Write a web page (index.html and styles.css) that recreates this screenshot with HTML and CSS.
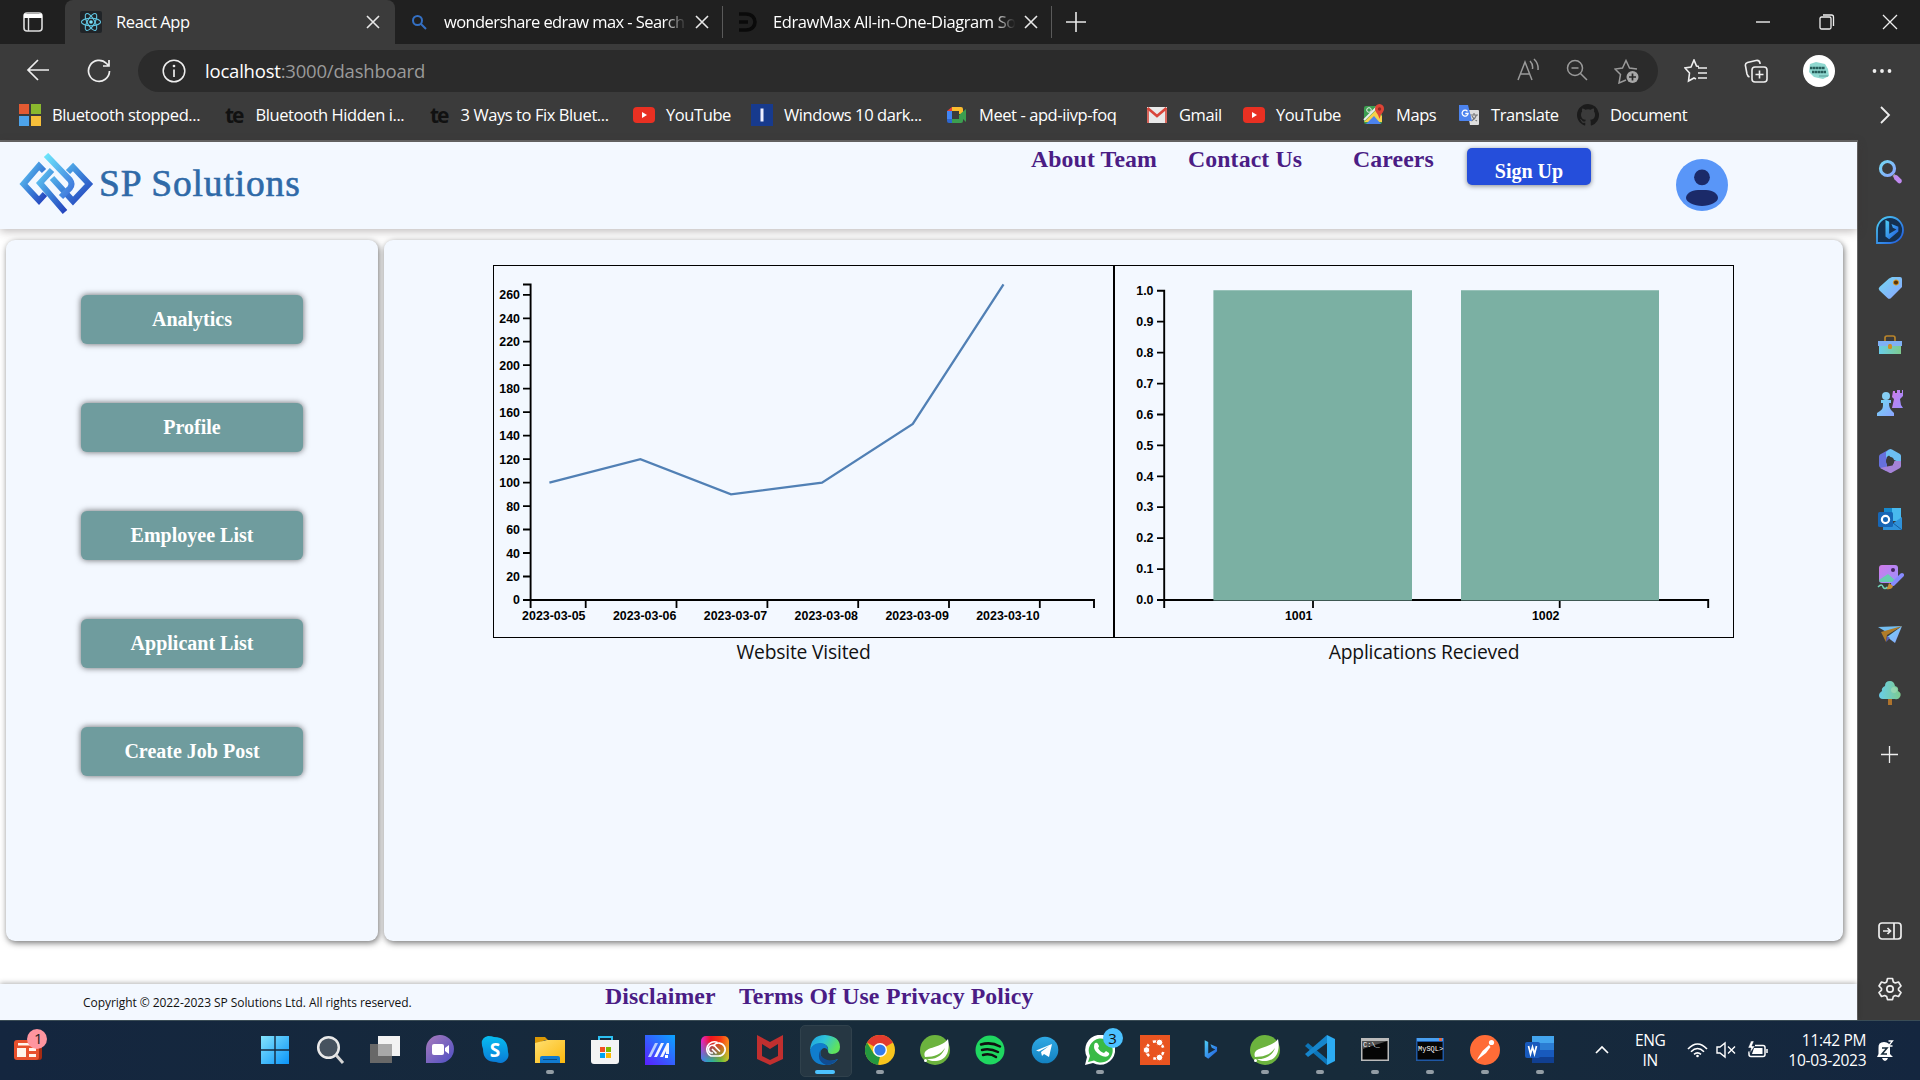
FILE: index.html
```html
<!DOCTYPE html>
<html lang="en">
<head>
<meta charset="utf-8">
<title>React App</title>
<link rel="stylesheet" href="styles.css">
</head>
<body>
<svg class="defs" width="0" height="0" aria-hidden="true">
  <defs>
    <linearGradient id="gLogo" x1="0" y1="0" x2="1" y2="1"><stop offset="0" stop-color="#5fc6f2"/><stop offset=".5" stop-color="#3b80d8"/><stop offset="1" stop-color="#2544bd"/></linearGradient>
    <linearGradient id="gLogoTop" x1="0" y1="0" x2="1" y2="1"><stop offset="0" stop-color="#6ce5fb"/><stop offset="1" stop-color="#3c70da"/></linearGradient>
    <linearGradient id="gSky" x1="0" y1="0" x2="1" y2="1"><stop offset="0" stop-color="#73d8f2"/><stop offset="1" stop-color="#8ba4ff"/></linearGradient>
    <linearGradient id="gPink" x1="0" y1="0" x2="1" y2="1"><stop offset="0" stop-color="#d07ae8"/><stop offset="1" stop-color="#9a91ff"/></linearGradient>
    <linearGradient id="gMint" x1="0" y1="0" x2="1" y2="0"><stop offset="0" stop-color="#68cdea"/><stop offset="1" stop-color="#7ecb8e"/></linearGradient>
    <linearGradient id="gBing" x1="0" y1="0" x2="1" y2="1"><stop offset="0" stop-color="#4fd0f5"/><stop offset="1" stop-color="#1f58e0"/></linearGradient>
    <linearGradient id="gWin" x1="0" y1="0" x2="1" y2="1"><stop offset="0" stop-color="#84e4fd"/><stop offset="1" stop-color="#0a94f8"/></linearGradient>
    <linearGradient id="gChat" x1="0" y1="0" x2="1" y2="1"><stop offset="0" stop-color="#a97bbb"/><stop offset="1" stop-color="#4d4fc4"/></linearGradient>
    <linearGradient id="gFolder" x1="0" y1="0" x2="1" y2="1"><stop offset="0" stop-color="#ffdf70"/><stop offset="1" stop-color="#fcb80d"/></linearGradient>
    <linearGradient id="gM" x1="0" y1="1" x2="1" y2="0"><stop offset="0" stop-color="#5b1dff"/><stop offset="1" stop-color="#0aa5ff"/></linearGradient>
    <linearGradient id="gCcTop" x1="0" y1="0" x2="1" y2="0"><stop offset="0" stop-color="#e22ad0"/><stop offset=".35" stop-color="#f0141e"/><stop offset=".7" stop-color="#f53a14"/><stop offset="1" stop-color="#ff8a1a"/></linearGradient>
    <linearGradient id="gCcLow" x1="0" y1="0" x2="1" y2="0"><stop offset="0" stop-color="#2f8cf0"/><stop offset=".4" stop-color="#28b6a0"/><stop offset=".7" stop-color="#5cc040"/><stop offset="1" stop-color="#c8d22c"/></linearGradient>
    <linearGradient id="gFade" x1="0" y1="0" x2="0" y2="1"><stop offset=".2" stop-color="#000"/><stop offset=".9" stop-color="#fff"/></linearGradient>
    <mask id="mCc"><path d="M0 0h30v30H0z" fill="url(#gFade)"/></mask>
    <linearGradient id="gEdgeTop" x1="0" y1="0" x2="1" y2=".4"><stop offset="0" stop-color="#1b9de2"/><stop offset=".5" stop-color="#2fc3d9"/><stop offset="1" stop-color="#5fe35c"/></linearGradient>
    <linearGradient id="gSky2" x1="0" y1="0" x2="0" y2="1"><stop offset="0" stop-color="#2fa9e4"/><stop offset="1" stop-color="#1381c0"/></linearGradient>
    <linearGradient id="gSkype" x1="0" y1="0" x2="0" y2="1"><stop offset="0" stop-color="#07bdf0"/><stop offset="1" stop-color="#0a7ad6"/></linearGradient>

    <symbol id="close" viewBox="0 0 16 16"><path d="M2 2l12 12M14 2L2 14" fill="none" stroke="#e8e8e8" stroke-width="1.6"/></symbol>
    <symbol id="youtube" viewBox="0 0 22 22"><rect y="3" width="22" height="16" rx="4" fill="#e93022"/><path d="M9 8l5 3-5 3z" fill="#fff"/></symbol>
    <symbol id="bingb" viewBox="0 0 24 24"><path d="M6 1l4 2v13l8-4.500-4-2-1.500-4 7.500 3v5L10 22l-4-3z" fill="url(#gBing)"/></symbol>
    <symbol id="spring" viewBox="0 0 30 30"><circle cx="15" cy="15" r="15" fill="#6cb33e"/><path d="M28 4c2 10 0 21-12 22-4 .3-7-.5-9-2 10 1 16-5 18-11-4 6-10 9-20 9C1 11 21 14 28 4z" fill="#fff"/><circle cx="5.500" cy="25.500" r="1.500" fill="#fff"/></symbol>
  </defs>
</svg>

<div class="screen">
  <div class="tabstrip">
    <div class="tab-actions"><svg width="22" height="22" viewBox="0 0 22 22"><rect x="2" y="2" width="18" height="18" rx="3" fill="none" stroke="#ddd" stroke-width="1.600"/><path d="M2 3h18v4H2z" fill="#fff"/><path d="M6.500 7v13" stroke="#ddd" stroke-width="1.400"/></svg></div>
    <div class="tab tab-active">
      <svg width="22" height="22" viewBox="0 0 22 22"><rect width="22" height="22" rx="2" fill="#202428"/><g fill="none" stroke="#61c6e2" stroke-width="1.100"><ellipse cx="11" cy="11" rx="9.600" ry="3.700"/><ellipse cx="11" cy="11" rx="9.600" ry="3.700" transform="rotate(60 11 11)"/><ellipse cx="11" cy="11" rx="9.600" ry="3.700" transform="rotate(120 11 11)"/></g><circle cx="11" cy="11" r="1.800" fill="#7fe0f5"/></svg>
      <span class="tab-title">React App</span>
      <svg width="16" height="16"><use href="#close"/></svg>
    </div>
    <div class="tab tab-search">
      <svg width="16" height="16" viewBox="0 0 16 16" fill="none" stroke="#3470c4" stroke-width="2"><circle cx="6.500" cy="6.500" r="4.500"/><path d="M10 10l5 5"/></svg>
      <span class="tab-title tab-fade">wondershare edraw max - Search</span>
      <svg width="16" height="16"><use href="#close"/></svg>
    </div>
    <div class="tab tab-edraw">
      <svg width="20" height="22" viewBox="0 0 20 22" fill="none" stroke="#0a0a0a" stroke-width="3.600"><path d="M1 3h7c12 0 12 16 0 16H1M1 11h9"/></svg>
      <span class="tab-title tab-fade">EdrawMax All-in-One-Diagram So</span>
      <svg width="16" height="16"><use href="#close"/></svg>
    </div>
    <div class="newtab"><svg width="20" height="20" viewBox="0 0 20 20"><path d="M10 0v20M0 10h20" stroke="#e8e8e8" stroke-width="1.600"/></svg></div>
    <div class="winctl">
      <svg width="16" height="16" viewBox="0 0 16 16"><path d="M1 8h14" stroke="#fff" stroke-width="1.300"/></svg>
      <svg width="16" height="16" viewBox="0 0 16 16" fill="none" stroke="#eee" stroke-width="1.300"><rect x="1" y="3" width="11" height="12" rx="1.500"/><path d="M4 1h8.500a2 2 0 0 1 2 2v9"/></svg>
      <svg width="16" height="16" viewBox="0 0 16 16"><path d="M1 1l14 14M15 1L1 15" stroke="#eee" stroke-width="1.300"/></svg>
    </div>
  </div>

  <div class="toolbar">
    <svg class="back" width="24" height="24" viewBox="0 0 24 24" fill="none" stroke="#eee" stroke-width="1.700"><path d="M23 11H2M12 1L2 11l10 10"/></svg>
    <svg class="reload" width="24" height="24" viewBox="0 0 24 24" fill="none" stroke="#eee" stroke-width="1.700"><path d="M22.500 12a10.500 10.500 0 1 1-3-7.500L22 7M22 1v6h-6"/></svg>
    <div class="omnibox">
      <svg width="24" height="24" viewBox="0 0 24 24" fill="none" stroke="#eee" stroke-width="1.500"><circle cx="12" cy="12" r="10.800"/><path d="M12 10.500V18" stroke-width="1.700"/><circle cx="12" cy="7" r=".6"/></svg>
      <span class="url">localhost<span class="path">:3000/dashboard</span></span>
      <div class="omni-icons">
        <svg width="24" height="24" viewBox="0 0 24 24" fill="none" stroke="#9a9a9a" stroke-width="1.500"><path d="M2 22L9 4l7 18M4.500 16h9M14 3c2 2 3 5 2.500 8M18 1c3 3 4.500 7 4 11"/></svg>
        <svg width="24" height="24" viewBox="0 0 24 24" fill="none" stroke="#9a9a9a" stroke-width="1.500"><circle cx="10" cy="10" r="7.500"/><path d="M6.500 10h7M15.500 15.500L22 22"/></svg>
        <svg width="26" height="26" viewBox="0 0 26 26" fill="none" stroke="#9a9a9a" stroke-width="1.500"><path d="M12 22l-7 3 1.500-8.500L1 11l7.500-1L12 2.500 15.500 10l7.500 1"/><circle cx="18.500" cy="19" r="6" fill="#a8a8a8" stroke="none"/><path d="M18.500 15.500v7M15 19h7" stroke="#2b2b2b" stroke-width="1.700"/></svg>
      </div>
    </div>
    <svg class="favs" width="24" height="24" viewBox="0 0 24 24" fill="none" stroke="#eee" stroke-width="1.600"><path d="M15 7.500l-2.500-.5L10 1 7 8 1 9l4.500 5L4.500 22 10 19l2 1M14 9h9M14 14h9M14 19h9"/></svg>
    <svg class="collections" width="24" height="24" viewBox="0 0 24 24" fill="none" stroke="#eee" stroke-width="1.600"><rect x="8" y="8" width="15" height="15" rx="3"/><path d="M15.500 11.500v8M11.500 15.500h8M5.500 18C4 17.500 3.500 17 3 15L1.500 7C1 5 2 4 3.500 3.500L12 1.500c2-.5 3.500.5 4 2.500v1"/></svg>
    <div class="profile"><svg width="32" height="32" viewBox="0 0 32 32"><circle cx="16" cy="16" r="16" fill="#fff"/><path d="M7 9l6-2 9 2 3 5 1 7-6 3-9-2-5-5z" fill="#8fd8d0"/><path d="M7 13h15M9 17h14" stroke="#265d5a" stroke-width="2.400" stroke-dasharray="2.500 .4"/><path d="M16 21h9" stroke="#5a9a95" stroke-width="1"/></svg></div>
    <svg class="dots" width="20" height="6" viewBox="0 0 20 6" fill="#eee"><circle cx="2.500" cy="3" r="1.900"/><circle cx="10" cy="3" r="1.900"/><circle cx="17.500" cy="3" r="1.900"/></svg>
  </div>

  <div class="bookmarks">
    <div class="bm"><svg width="22" height="22" viewBox="0 0 22 22"><path d="M0 0h10v10H0z" fill="#e35a32"/><path d="M12 0h10v10H12z" fill="#8ab82e"/><path d="M0 12h10v10H0z" fill="#4da3ea"/><path d="M12 12h10v10H12z" fill="#f7bf3a"/></svg><span>Bluetooth stopped...</span></div>
    <div class="bm bm-te"><b class="te">te</b><span>Bluetooth Hidden i...</span></div>
    <div class="bm bm-te"><b class="te">te</b><span>3 Ways to Fix Bluet...</span></div>
    <div class="bm"><svg width="22" height="22"><use href="#youtube"/></svg><span>YouTube</span></div>
    <div class="bm"><svg width="22" height="22" viewBox="0 0 22 22"><path d="M0 0h22v22H0z" fill="#173a8d"/><path d="M9.500 4.500h3v13h-3z" fill="#eef"/></svg><span>Windows 10 dark...</span></div>
    <div class="bm"><svg width="22" height="22" viewBox="0 0 22 22"><path d="M1 7l5-4v4z" fill="#e94335"/><path d="M6 3h9a2 2 0 0 1 2 2v5h-4V7H6z" fill="#fbbc2e"/><path d="M1 7h5v8H1z" fill="#4285f4"/><path d="M1 15h5v4H3a2 2 0 0 1-2-2z" fill="#2d66d0"/><path d="M6 15h7v-4l7-6v13l-3-3v2a2 2 0 0 1-2 2H6z" fill="#3c9e50"/></svg><span>Meet - apd-iivp-foq</span></div>
    <div class="bm"><svg width="22" height="22" viewBox="0 0 22 22"><path d="M1 3h20v16H1z" fill="#e9e9e9"/><path d="M2 19V4" fill="none" stroke="#d9675d" stroke-width="2"/><path d="M20 19V4" fill="none" stroke="#d9675d" stroke-width="2"/><path d="M1.500 4l9.500 8 9.500-8" fill="none" stroke="#d9463b" stroke-width="2.600"/></svg><span>Gmail</span></div>
    <div class="bm"><svg width="22" height="22"><use href="#youtube"/></svg><span>YouTube</span></div>
    <div class="bm"><svg width="22" height="22" viewBox="0 0 22 22"><rect x="1" y="2" width="18" height="18" rx="2" fill="#3c9e50"/><path d="M1 18L13 6l6 6v6z" fill="#f6d14a"/><path d="M3 20l8-8 7 8z" fill="#4c83ee"/><path d="M1 16L15 2" stroke="#eee" stroke-width="2"/><path d="M16.500 0a4.700 4.700 0 0 1 4.500 5c0 3-3 4-4.500 10C15 9 12 8 12 5a4.700 4.700 0 0 1 4.500-5z" fill="#de4436"/><circle cx="16.500" cy="5" r="1.700" fill="#8d2a22"/><circle cx="6" cy="6" r="2.300" fill="none" stroke="#eee"/></svg><span>Maps</span></div>
    <div class="bm"><svg width="22" height="22" viewBox="0 0 22 22"><path d="M9 6h11a1 1 0 0 1 1 1v13a1 1 0 0 1-1 1h-8z" fill="#ddd"/><path d="M12 11h8M16 9v2M18.500 11c-1 3-3 5-5 6M14 12c1 2 3 4 5 5" stroke="#777" stroke-width="1.200" fill="none"/><path d="M1 1h9l4 16H2a1 1 0 0 1-1-1z" fill="#4c83ee"/><path d="M9.500 7.300a3 3 0 1 0 .6 2.200H7.300" stroke="#fff" stroke-width="1.300" fill="none"/></svg><span>Translate</span></div>
    <div class="bm"><svg width="22" height="22" viewBox="0 0 16 16"><path fill="#1b1b1b" d="M8 0C3.580 0 0 3.580 0 8c0 3.540 2.290 6.530 5.470 7.590.4.070.55-.17.55-.38 0-.19-.01-.82-.01-1.490-2.010.37-2.530-.49-2.690-.94-.09-.23-.48-.94-.82-1.130-.28-.15-.68-.52-.01-.53.63-.01 1.080.58 1.230.82.72 1.210 1.870.87 2.330.66.07-.52.28-.87.510-1.070-1.780-.2-3.640-.89-3.640-3.950 0-.87.31-1.590.82-2.150-.08-.2-.36-1.020.08-2.120 0 0 .67-.21 2.200.82a7.600 7.600 0 0 1 4 0c1.530-1.040 2.200-.82 2.200-.82.44 1.100.16 1.920.08 2.120.51.56.82 1.270.82 2.150 0 3.070-1.870 3.750-3.650 3.950.29.25.54.73.54 1.480 0 1.070-.01 1.930-.01 2.200 0 .21.15.46.55.38A8 8 0 0 0 8 0z"/></svg><span>Document</span></div>
    <svg class="more" width="12" height="20" viewBox="0 0 12 20" fill="none" stroke="#eee" stroke-width="1.800"><path d="M1 2l8 8-8 8"/></svg>
  </div>

  <div class="browser-body">
    <div class="page">
      <header class="site-header">
        <svg class="logo" width="76" height="62" viewBox="0 0 76 62" fill="none" stroke-width="6">
          <path d="M25 18l-5-5L4.500 31 20 47.500 26 41" stroke="url(#gLogo)"/>
          <path d="M49 19l5-5L70 31 54 48 33 25" stroke="url(#gLogo)"/>
          <path d="M27 2l24 25q3 4 0 8l-9 9" stroke="url(#gLogoTop)"/>
          <path d="M33 17L21 30l25 29" stroke="url(#gLogo)"/>
        </svg>
        <span class="brand">SP Solutions</span>
        <nav class="topnav"><a>About Team</a><a>Contact Us</a><a>Careers</a></nav>
        <button class="signup">Sign Up</button>
        <svg class="avatar" width="52" height="52" viewBox="0 0 52 52"><circle cx="26" cy="26" r="26" fill="#5996f8"/><circle cx="26" cy="18.300" r="7.900" fill="#1b2a69"/><path d="M22 31h8c7 0 12 4 12 8 0 4-8 8-16 8s-16-4-16-8c0-4 5-8 12-8z" fill="#1b2a69"/></svg>
      </header>

      <div class="columns">
        <aside class="side">
          <button>Analytics</button><button>Profile</button><button>Employee List</button><button>Applicant List</button><button>Create Job Post</button>
        </aside>
        <main class="main">
          <figure class="chart">
            <svg class="plot plot-line" viewBox="494 266 619 371">
              <path class="axis" d="M523 284.500h7.600V600h563.400v8M530.600 600v8"/>
              <path class="ticks" d="M523 294.800h7.600M523 318.300h7.600M523 341.700h7.600M523 365.200h7.600M523 388.700h7.600M523 412.200h7.600M523 435.600h7.600M523 459.100h7.600M523 482.600h7.600M523 506.100h7.600M523 529.500h7.600M523 553h7.600M523 576.500h7.600M523 600h7.600M585.700 600v8M676.500 600v8M767.400 600v8M858.200 600v8M949 600v8M1039.800 600v8"/>
              <g class="lbl"><text x="520" y="299">260</text><text x="520" y="322.500">240</text><text x="520" y="346">220</text><text x="520" y="369.500">200</text><text x="520" y="393">180</text><text x="520" y="416.500">160</text><text x="520" y="440">140</text><text x="520" y="463.500">120</text><text x="520" y="487">100</text><text x="520" y="510.500">80</text><text x="520" y="534">60</text><text x="520" y="557.500">40</text><text x="520" y="581">20</text><text x="520" y="604">0</text>
              <text x="585.500" y="620">2023-03-05</text><text x="676.300" y="620">2023-03-06</text><text x="767.200" y="620">2023-03-07</text><text x="858" y="620">2023-03-08</text><text x="948.800" y="620">2023-03-09</text><text x="1039.600" y="620">2023-03-10</text></g>
              <path class="line" d="M549.400 482.600L640.400 459.100 731 494.300 822 482.600 912.800 424 1003.500 284.300"/>
            </svg>
            <figcaption>Website Visited</figcaption>
          </figure>
          <figure class="chart">
            <svg class="plot plot-bar" viewBox="1115 266 618 371">
              <path class="axis" d="M1157 290.800h7.200V600h544v8M1164.200 600v8"/>
              <path class="ticks" d="M1157 321.700h7.200M1157 352.600h7.200M1157 383.600h7.200M1157 414.500h7.200M1157 445.400h7.200M1157 476.300h7.200M1157 507.200h7.200M1157 538.200h7.200M1157 569.100h7.200M1157 600h7.200M1313 600v8M1559.700 600v8"/>
              <path d="M1213.400 290.300H1412V600.500h-198.600zM1461 290.300h198V600.500h-198z" fill="#7bb0a3"/>
              <g class="lbl"><text x="1153.500" y="295">1.0</text><text x="1153.500" y="326">0.9</text><text x="1153.500" y="357">0.8</text><text x="1153.500" y="387.500">0.7</text><text x="1153.500" y="418.500">0.6</text><text x="1153.500" y="449.500">0.5</text><text x="1153.500" y="480.500">0.4</text><text x="1153.500" y="511">0.3</text><text x="1153.500" y="542">0.2</text><text x="1153.500" y="573">0.1</text><text x="1153.500" y="604">0.0</text><text x="1312.500" y="620">1001</text><text x="1559.500" y="620">1002</text></g>
            </svg>
            <figcaption>Applications Recieved</figcaption>
          </figure>
        </main>
      </div>

      <footer class="site-footer">
        <span class="copy">Copyright © 2022-2023 SP Solutions Ltd. All rights reserved.</span>
        <nav class="footnav"><a>Disclaimer</a><a>Terms Of Use</a><a>Privacy Policy</a></nav>
      </footer>
    </div>

    <div class="edgebar">
      <svg viewBox="0 0 28 28"><circle cx="11.500" cy="10.500" r="7" fill="none" stroke="url(#gSky)" stroke-width="3.200"/><path d="M17.500 17l2 2" stroke="#a9a4a8" stroke-width="3"/><path d="M20 19.500l3.500 3.500" stroke="#c08af0" stroke-width="4.600" stroke-linecap="round"/></svg>
      <svg viewBox="0 0 28 28"><path d="M1 27V14A13 13 0 1 1 14 27z" fill="#15304f" stroke="url(#gBing)" stroke-width="1.800"/><svg x="4" y="3" width="22" height="22" class="inner"><use href="#bingb"/></svg></svg>
      <svg viewBox="0 0 28 28"><path d="M16 3h8a2 2 0 0 1 2 2v8L15 24a2.500 2.500 0 0 1-3.500 0L3.500 16.500a2.500 2.500 0 0 1 0-3.500L13 4.500z" fill="url(#gSky)"/><circle cx="20" cy="8.500" r="2.600" fill="#5b3508" stroke="#dc9b28"/></svg>
      <svg viewBox="0 0 28 28"><path d="M9 9V6q0-2 2-2h6q2 0 2 2v3" fill="none" stroke="#b9842b" stroke-width="1.700"/><path d="M3 13h22v9H3z" fill="url(#gMint)"/><path d="M2 9h24v5H2z" fill="#7fb0f5"/><rect x="12" y="12" width="4" height="5" rx="1.500" fill="#cf8f25"/></svg>
      <svg viewBox="0 0 28 28"><path d="M17 2h2v2h2V1h3v3h2V1h1v6l-3 3 1 6 2 3H16l2-9-2-2z" fill="url(#gPink)"/><circle cx="10" cy="7" r="4" fill="#86cdf3"/><path d="M5 11h10v3h-2c0 4 1 6 3 8l2 2v3H1v-3l3-2c3-2 3-4 3-8H5z" fill="url(#gSky)"/></svg>
      <svg viewBox="0 0 28 28"><path d="M13 2.500L4 7.500q-1 1-1 2v9q0 1 1 2l6 3.500 1-4V9l3-2z" fill="#6670dc"/><path d="M13 2.500q1.500-1 3 0l8 4.500q1 1 1 2v7l-8-3.500-4-4-3 2V5z" fill="#6cbef3"/><path d="M25 14v5q0 1-1 2l-8 4.500q-1.500 1-3 0L4 21l7-1.500 5.500-1 2-4.500z" fill="#a583d8"/><circle cx="14" cy="14" r="4" fill="#3b3b3b"/></svg>
      <svg viewBox="0 0 28 28"><path d="M8 3h17v13H8z" fill="#48b9ee"/><path d="M8 3h8v7H8z" fill="#1688cc"/><path d="M7 23V14l9 5 10-7v13H7z" fill="#2f92da"/><path d="M26 25l-9-7" stroke="#165e9e"/><rect x="2" y="7" width="15" height="15" rx="1.500" fill="#1766b5"/><circle cx="9.500" cy="14.500" r="3.600" fill="none" stroke="#fff" stroke-width="2.200"/></svg>
      <svg viewBox="0 0 28 28"><rect x="3" y="2" width="19" height="18" rx="3" fill="url(#gPink)"/><path d="M3 17l9-6 9 8H6q-3 0-3-2z" fill="#67cdb0"/><circle cx="17" cy="7" r="2" fill="#44265f"/><path d="M26 12l-9 9" stroke="#878bff" stroke-width="4" stroke-linecap="round"/><path d="M13 20l4 3q-1 4-7 3l2-3z" fill="#c98e38"/><path d="M2 24q4-4 5 0 2 3 4 0" fill="none" stroke="#72d4b7" stroke-width="1.500"/></svg>
      <svg viewBox="0 0 28 28"><path d="M2 6l24-1-14 7z" fill="#73bdf0"/><path d="M26 5L19 22l-8-6z" fill="url(#gSky)"/><path d="M5 11L26 5 11 14l-1 7z" fill="#b07c28"/><path d="M11 15l-1 6 4-4z" fill="#5961b8"/></svg>
      <svg viewBox="0 0 28 28"><path d="M12 18h4v8h-4z" fill="#ae732c"/><path d="M14 2q4 0 5 5 4 1 3 5 4 2 2 6-2 3-5 2H7q-4 0-4-4 0-2 3-4-1-3 3-5 0-5 5-5z" fill="url(#gMint)"/><circle cx="18" cy="11" r="3" fill="#b1dfb5" opacity=".5"/></svg>
      <svg class="e-plus" viewBox="0 0 28 28"><path d="M13.500 6v17M5 14.500h17" stroke="#eee" stroke-width="1.300"/></svg>
      <i class="rule"></i>
      <svg class="e-panel" viewBox="0 0 28 28" fill="none" stroke="#eee" stroke-width="1.700"><rect x="3" y="6" width="22" height="16" rx="3"/><path d="M18 6v16M7 14h7M11.500 11l3 3-3 3"/></svg>
      <svg viewBox="0 0 28 28" fill="none" stroke="#eee" stroke-width="1.700" stroke-linejoin="round"><circle cx="14" cy="14" r="3.200"/><path d="M11.500 3.500h5l.8 3.400 2 1.100 3.200-1 2.500 4-2.500 2.500v1.600l2.500 2.400-2.500 4-3.200-1-2 1.100-.8 3h-5l-.8-3-2-1.100-3.200 1-2.500-4 2.500-2.400v-1.600L3 11l2.500-4 3.200 1 2-1.100z"/></svg>
    </div>
  </div>

  <div class="taskbar">
    <div class="widget"><svg width="46" height="46" viewBox="0 0 46 46"><rect x="18" y="19" width="15" height="19" rx="3" fill="#a52b13"/><rect x="5" y="18" width="25" height="20" rx="3" fill="#e8502d"/><path d="M9 21h17v2.500H9zM8 26h9v9H8zM20 26h7v3h-7zM20 32h7v3h-7z" fill="#fff4ec"/><circle cx="28" cy="17" r="10" fill="#ff959f"/></svg><span>1</span></div>
    <div class="apps">
      <div><svg viewBox="0 0 30 30" fill="url(#gWin)"><path d="M1 1h13.300v13.300H1zM15.700 1H29v13.300H15.700zM1 15.700h13.300V29H1zM15.700 15.700H29V29H15.700z"/></svg></div>
      <div><svg viewBox="0 0 30 30"><circle cx="13.500" cy="12.500" r="10.300" fill="#46525f" stroke="#e9e9e9" stroke-width="2.500"/><path d="M21 20l7 8" stroke="#d5d5d5" stroke-width="3"/></svg></div>
      <div><svg viewBox="0 0 30 30"><path d="M0 9h22v19H0z" fill="#686868"/><path d="M8 1h22v20H8z" fill="#f3f3f3"/><path d="M8 9h14v12H8z" fill="#a8a8a8"/></svg></div>
      <div><svg viewBox="0 0 30 30"><path d="M1 28V15A14 14 0 1 1 15 28z" fill="url(#gChat)"/><rect x="7" y="9" width="12" height="11" rx="2" fill="#fff"/><path d="M20 13l4-3v9l-4-3z" fill="#fff"/></svg></div>
      <div><svg viewBox="0 0 30 30"><path d="M8 1q4 0 6 1 14 0 14 15 2 6-4 10-3 2-8 0Q3 27 3 14-1 3 8 1z" fill="url(#gSkype)"/><text x="15" y="22" class="skype-s">S</text></svg></div>
      <div class="run"><svg viewBox="0 0 30 30"><path d="M0 2h10l3 3h-3L0 10z" fill="#da9805"/><path d="M0 8l12-3h18v23H0z" fill="url(#gFolder)"/><path d="M5 28v-5q0-2 2-2h16q2 0 2 2v5z" fill="#117bd1"/><path d="M8 24.500h14" stroke="#0a4d86"/></svg></div>
      <div><svg viewBox="0 0 30 30"><path d="M9 7V2h13v5" fill="none" stroke="#2cc0f2" stroke-width="2"/><path d="M1 5h28v21q0 3-3 3H4q-3 0-3-3z" fill="#f4f4f4"/><path d="M10 12h5v5h-5z" fill="#f25022"/><path d="M16 12h5v5h-5z" fill="#7fba00"/><path d="M10 18h5v5h-5z" fill="#00a4ef"/><path d="M16 18h5v5h-5z" fill="#ffb900"/></svg></div>
      <div><svg viewBox="0 0 30 30"><path d="M0 0h30v30H0z" fill="url(#gM)"/><path d="M3 22h3l7-14h-3z" fill="#b9cdff"/><path d="M9 22h3l7-14h-3zM15 22h3l3-6v3h3V8h-2z" fill="#f2f5ff"/><path d="M20 20h3v3h-3z" fill="#fff"/></svg></div>
      <div><svg viewBox="0 0 30 30"><rect x="1" y="1" width="28" height="26" rx="5" fill="url(#gCcTop)"/><rect x="1" y="1" width="28" height="26" rx="5" fill="url(#gCcLow)" mask="url(#mCc)"/><g fill="none" stroke="#fff" stroke-width="1.700"><path d="M17.500 7.500a7 7 0 1 0-6.500 13.500h7.500a6.500 6.500 0 1 0-5-10.500"/><path d="M20 16.500l-4-4a4 4 0 1 0-5 5.500h2M12 14l4.500 4.500"/></g></svg></div>
      <div><svg viewBox="0 0 30 30"><path d="M2 0l13 7 13-7v24l-13 6-13-6z" fill="#c02f2f"/><path d="M7 9l8 5 8-5v12l-8 4-8-4z" fill="#172b3a"/></svg></div>
      <div class="run current"><svg viewBox="0 0 30 30"><path d="M0 15Q1 0 15 0q15 1 15 12 0 7-8 7-4 0-4-3 1-5-4-7Q5 7 0 15z" fill="url(#gEdgeTop)"/><path d="M0 15Q3 8 10 8q8 0 8 8-1-3-4-3-5 2-3 8 4 8 17 3-5 7-14 6Q1 29 0 15z" fill="#107dcd"/><path d="M11 14q-3 7 4 10 6 3 13 0-5 6-12 6Q5 25 11 14z" fill="#114c91"/></svg></div>
      <div class="run"><svg viewBox="0 0 30 30"><circle cx="15" cy="15" r="15" fill="#f9c51d"/><path d="M15 15L2 7.500A15 15 0 0 1 28 7.500z" fill="#e33b2e"/><path d="M2 7.500L9 19l6 2.500L13 30A15 15 0 0 1 2 7.500z" fill="#24983f"/><circle cx="15" cy="15" r="7" fill="#fff"/><circle cx="15" cy="15" r="5.600" fill="#347cea"/></svg></div>
      <div><svg viewBox="0 0 30 30"><use href="#spring"/></svg></div>
      <div><svg viewBox="0 0 30 30"><circle cx="15" cy="15" r="14.500" fill="#1fd760"/><path d="M6 9.500q10-3 19 2M7 15q8-2 16 2M8 20q7-2 13 2" fill="none" stroke="#101010" stroke-width="2.500" stroke-linecap="round"/></svg></div>
      <div><svg viewBox="0 0 30 30"><circle cx="15" cy="15" r="13.300" fill="url(#gSky2)"/><path d="M6 15.500L22 9l-3 13-5-3-2 2-1-4 8-6-10 5.500z" fill="#fff"/></svg></div>
      <div class="run"><svg viewBox="0 0 30 30"><path d="M0 30l2-8A15 15 0 1 1 8 28z" fill="#fff"/><path d="M3 27l2-6A12 12 0 1 1 9 25.500z" fill="#39ba46"/><path d="M10 8q2-1 3 1l1 2q0 1-1 2 2 4 6 5l2-2 3 2q1 1-1 3-3 2-8-1-6-4-6-8 0-3 1-4z" fill="#fff"/></svg><b class="badge">3</b></div>
      <div><svg viewBox="0 0 30 30"><path d="M0 0h30v30H0z" fill="#e95420"/><circle cx="15" cy="15" r="8.500" fill="none" stroke="#fff" stroke-width="2.600" stroke-dasharray="13 4.800" stroke-dashoffset="-2"/><g fill="#fff" stroke="#e95420"><circle cx="6.500" cy="15" r="3.300"/><circle cx="19.500" cy="7.500" r="3.300"/><circle cx="19.500" cy="22.500" r="3.300"/></g></svg></div>
      <div><svg viewBox="-5 -5 34 34"><use href="#bingb" width="24" height="24"/></svg></div>
      <div class="run"><svg viewBox="0 0 30 30"><use href="#spring"/></svg></div>
      <div class="run"><svg viewBox="0 0 30 30"><path d="M3 8L22 24v6L0 11z" fill="#0d75b8"/><path d="M0 19L22 0v8L3 22z" fill="#1686cd"/><path d="M22 0l8 4v22l-8 4z" fill="#2cabf2"/></svg></div>
      <div class="run"><svg viewBox="0 0 30 30"><path d="M1 3h28v23H1z" fill="#bbb"/><path d="M2.500 6h25v18.500h-25z" fill="#050505"/><path d="M2.500 6h25l-25 8z" fill="#505050"/><text x="3" y="12" class="cmd-t">C:\_</text></svg></div>
      <div class="run"><svg viewBox="0 0 30 30"><path d="M1 3h28v23H1z" fill="#1f58a5"/><path d="M2 3h26v3H2z" fill="#49a0f0"/><path d="M24 3h3v3h-3z" fill="#e06a46"/><path d="M2.500 7h25v17.500h-25z" fill="#050505"/><text x="3" y="16" class="cmd-t">MySQL&gt;</text></svg></div>
      <div class="run"><svg viewBox="0 0 30 30"><circle cx="15" cy="15" r="15" fill="#ff6c37"/><circle cx="21.500" cy="7.500" r="2.600" fill="#fff"/><path d="M19 10l1.500 2-4.500 6-9 7 1.500-3 4-6z" fill="#fff"/></svg></div>
      <div class="run"><svg viewBox="0 0 30 30"><path d="M7 1h22v7H7z" fill="#43a5ee"/><path d="M7 8h22v7H7z" fill="#2b7cd3"/><path d="M7 15h22v7H7z" fill="#185abd"/><path d="M7 22h22v6H7z" fill="#103f91"/><rect y="7" width="15" height="16" rx="2" fill="#185abd"/><path d="M3.500 11l2 8 2-7 2 7 2-8" fill="none" stroke="#fff" stroke-width="1.700"/></svg></div>
    </div>
    <div class="tray">
      <svg class="up" width="14" height="9" viewBox="0 0 14 9" fill="none" stroke="#fff" stroke-width="1.700"><path d="M1 8l6-6 6 6"/></svg>
      <div class="lang"><span>ENG</span><span>IN</span></div>
      <svg class="wifi" width="21" height="16" viewBox="0 0 21 16" fill="none" stroke="#fff" stroke-width="1.600"><path d="M1 7q9.500-10 19 0M4 9.700q6.500-6.500 13 0M7 12.300q3.500-3 7 0"/><circle cx="10.500" cy="14" r="1.300" fill="#fff" stroke="none"/></svg>
      <svg class="vol" width="21" height="18" viewBox="0 0 21 18" fill="none" stroke="#fff" stroke-width="1.400"><path d="M1 6h3l5-4v14l-5-4H1zM12 5.500l7 7M19 5.500l-7 7"/></svg>
      <svg class="bat" width="22" height="18" viewBox="0 0 22 18" fill="none" stroke="#fff" stroke-width="1.500"><path d="M8 4.500h8a2 2 0 0 1 2 2v7a2 2 0 0 1-2 2H4a2 2 0 0 1-2-2v-3M20 8v4"/><path d="M7 7h8.500v6H5z" fill="#fff" stroke="none"/><path d="M4 0L1 7h3l-1 5 5-7H5l2-5z" fill="#fff" stroke="#14263c" stroke-width=".5"/></svg>
      <div class="clock"><span>11:42 PM</span><span>10-03-2023</span></div>
      <svg class="bell" width="20" height="22" viewBox="0 0 20 22"><path d="M8 3q6 0 6 6v6l3 3H1l1.500-3V9Q2 3 8 3zM6 19h6q-1 3-3 3t-3-3z" fill="#fff"/><path d="M6 9h5l-5 6h5" fill="none" stroke="#172b3a" stroke-width="1.600"/><path d="M12.500 2h4l-4 5h4" fill="none" stroke="#fff" stroke-width="1.300"/></svg>
    </div>
  </div>
</div>
</body>
</html>
```
FILE: styles.css
```css
* { box-sizing: border-box; }
body { margin: 0; font-family: "Open Sans", "Noto Sans", sans-serif; background: #fff; }
svg { display: block; flex: none; }
.defs { position: absolute; }
.screen { width: 1920px; height: 1080px; overflow: hidden; display: flex; flex-direction: column; background: #3b3b3b; }
span { white-space: nowrap; }

/* Browser tabs */
.tabstrip { height: 44px; background: #202020; display: flex; align-items: stretch; color: #fff; flex: none; }
.tab-actions { width: 65px; padding: 11px 0 0 22px; }
.tab { display: grid; align-items: center; font-size: 16.5px; letter-spacing: -.4px; }
.tab-active { width: 330px; padding-left: 15px; grid-template-columns: 36px 249px 16px; background: #3b3b3b; border-radius: 8px 8px 0 0; }
.tab-search { width: 328px; padding-left: 16px; grid-template-columns: 33px 250px 16px; letter-spacing: -.58px; background: linear-gradient(#5a5a5a, #5a5a5a) right center / 1px 32px no-repeat; }
.tab-edraw { width: 329px; padding-left: 15px; grid-template-columns: 35px 250px 16px; background: linear-gradient(#5a5a5a, #5a5a5a) right center / 1px 32px no-repeat; }
.tab-title { line-height: 24px; }
.tab-fade { width: 250px; mask-image: linear-gradient(90deg, #000 88%, transparent 97%); }
.newtab { padding: 12px 0 0 14px; }
.winctl { margin-left: auto; margin-right: 22px; display: flex; align-items: center; gap: 47.5px; }

/* Address bar */
.toolbar { height: 54px; flex: none; display: flex; align-items: center; }
.back { margin-left: 26px; }
.reload { margin-left: 37px; }
.omnibox { margin-left: 27px; width: 1520px; height: 42px; border-radius: 21px; background: #2b2b2b; display: flex; align-items: center; padding-left: 24px; }
.url { margin: -2px 0 0 19px; color: #fff; font-size: 18.5px; letter-spacing: -.2px; }
.path { color: #9a9a9a; }
.omni-icons { display: flex; gap: 25px; margin-left: auto; margin-right: 18px; }
.favs { margin-left: 26px; }
.collections { margin-left: 36px; }
.profile { margin-left: 35px; }
.dots { margin-left: 37px; }

/* Bookmarks */
.bookmarks { height: 42px; flex: none; padding: 0 0 8px 19px; display: grid; align-items: center; grid-template-columns: 206px 205px 203px 118px 195px 200px 97px 120px 95px 119px 303px 12px; color: #fff; font-size: 16.5px; letter-spacing: -.42px; }
.bm { display: grid; grid-template-columns: 33px 1fr; align-items: center; line-height: 24px; }
.bm-te { grid-template-columns: 30.5px 1fr; }
.te { color: #111; font: bold 21px/20px "Open Sans", sans-serif; letter-spacing: -2px; }

.browser-body { flex: 1; min-height: 0; display: flex; }
.page { width: 1858px; border-top: 2px solid #666; border-right: 1px solid #666; background: #fff; display: flex; flex-direction: column; }

/* Site header */
.site-header { height: 87px; flex: none; background: #f3f8ff; box-shadow: 0 2px 9px rgba(60, 50, 50, .35); display: flex; align-items: flex-start; font-family: "Liberation Serif", serif; }
.logo { margin: 11px 0 0 19px; }
.brand { margin: 17px 0 0 4px; width: 932px; font-size: 37.5px; line-height: 50px; letter-spacing: .85px; color: #2f6aa8; -webkit-text-stroke: .6px #2f6aa8; }
.topnav { display: grid; grid-template-columns: 157px 165px 114px; }
.topnav a, .footnav a { font: bold 23.8px/30px "Liberation Serif", serif; letter-spacing: .1px; color: #4b1d85; white-space: nowrap; }
.topnav a { padding-top: 2px; }
.signup { margin-top: 6px; width: 124px; height: 37px; border: 0; padding: 8px 0 0; border-radius: 5px; background: #254edb; color: #fff; font: bold 20px/28px "Liberation Serif", serif; box-shadow: 0 1px 5px rgba(0, 0, 0, .45); }
.avatar { margin: 17px 0 0 85px; }

/* Dashboard */
.columns { margin: 11px 14px 0 6px; height: 701px; flex: none; display: grid; grid-template-columns: 372px 1459px; gap: 6px; }
.side, .main { background: #f3f8ff; border-radius: 9px; box-shadow: 1px 2px 6px rgba(0, 0, 0, .55); }
.side { padding: 55px 0 0 75px; display: flex; flex-direction: column; gap: 59px; }
.side button { width: 222px; height: 49px; flex: none; border: 0; border-radius: 6px; background: #6f9c9e; color: #fff; font: bold 20px/28px "Liberation Serif", serif; padding: 0 0 1px; box-shadow: 0 0 6px rgba(0, 0, 0, .6); }
.main { padding: 25px 0 0 109px; display: flex; }
.chart { margin: 0; }
.plot { height: 373px; border: 1px solid #000; }
.plot-line { width: 621px; }
.plot-bar { width: 620px; }
.axis { fill: none; stroke: #000; stroke-width: 1.9; }
.ticks { fill: none; stroke: #000; stroke-width: 1.8; }
.line { fill: none; stroke: #5180b5; stroke-width: 2.3; }
.lbl { font: bold 12.4px "Liberation Sans", Arial, sans-serif; text-anchor: end; }
figcaption { text-align: center; font-size: 19.3px; line-height: 28px; letter-spacing: -.2px; color: #111; }

/* Site footer */
.site-footer { margin-top: 43px; flex: 1; background: #f3f8ff; box-shadow: 0 -1px 5px rgba(0, 0, 0, .3); display: flex; padding-left: 83px; }
.copy { width: 522px; font-size: 12px; line-height: 20px; padding-top: 9px; letter-spacing: -.06px; color: #111; }
.footnav { display: grid; grid-template-columns: 134px 147px 160px; align-items: start; margin-top: -3px; }

/* Browser side bar */
.edgebar { width: 62px; display: flex; flex-direction: column; align-items: center; padding: 18px 0 0 1px; }
.edgebar svg { width: 28px; height: 28px; margin-bottom: 29.85px; }
.edgebar svg.inner { width: 22px; height: 22px; }
.edgebar .e-plus { margin-top: 3.5px; }
.edgebar .rule { display: block; width: 39px; height: 1px; background: #777; margin: 101px 0 18px; }
.edgebar svg.e-panel { margin-bottom: 30px; }

/* Taskbar */
.taskbar { height: 60px; flex: none; border-top: 1px solid #3a4c55; background: linear-gradient(90deg, #14263f, #172b3a 45%, #172b3a 70%, #14263f); display: flex; color: #fff; }
.widget { position: relative; width: 248px; padding: 1px 0 0 9px; }
.widget span { position: absolute; left: 34px; top: 6px; color: #222; font-size: 15px; line-height: 22px; }
.apps { display: grid; grid-template-columns: repeat(24, 54.98px); }
.apps > div { position: relative; display: flex; justify-content: center; padding-top: 14px; }
.apps svg { width: 30px; height: 30px; }
.run::after { content: ""; position: absolute; left: 23.500px; top: 49px; width: 8px; height: 4px; border-radius: 2px; background: #939da5; }
.current::before { content: ""; position: absolute; left: 2.500px; top: 4px; width: 50px; height: 50px; border: 1px solid #30414c; border-radius: 5px; background: #263743; }
.current svg { position: relative; }
.run.current::after { left: 17.500px; width: 20px; background: #4cc2ff; }
.badge { position: absolute; left: 30px; top: 7px; width: 20px; height: 20px; border-radius: 50%; background: #4cc2ff; color: #111; font: 15px/20px "Open Sans", sans-serif; text-align: center; }
.skype-s { font: bold 19px "Open Sans", sans-serif; fill: #fff; text-anchor: middle; }
.cmd-t { font: 7px "Liberation Mono", monospace; fill: #fff; }
.tray { display: flex; align-items: center; font-size: 15.5px; letter-spacing: -.3px; line-height: 20px; padding-bottom: 2px; }
.up { margin-left: 28px; }
.lang { width: 40px; margin-left: 21px; display: flex; flex-direction: column; align-items: center; }
.wifi { margin-left: 17px; }
.vol { margin-left: 8px; }
.bat { margin-left: 10px; }
.clock { width: 97px; display: flex; flex-direction: column; align-items: flex-end; }
.bell { margin-left: 10px; }
```
